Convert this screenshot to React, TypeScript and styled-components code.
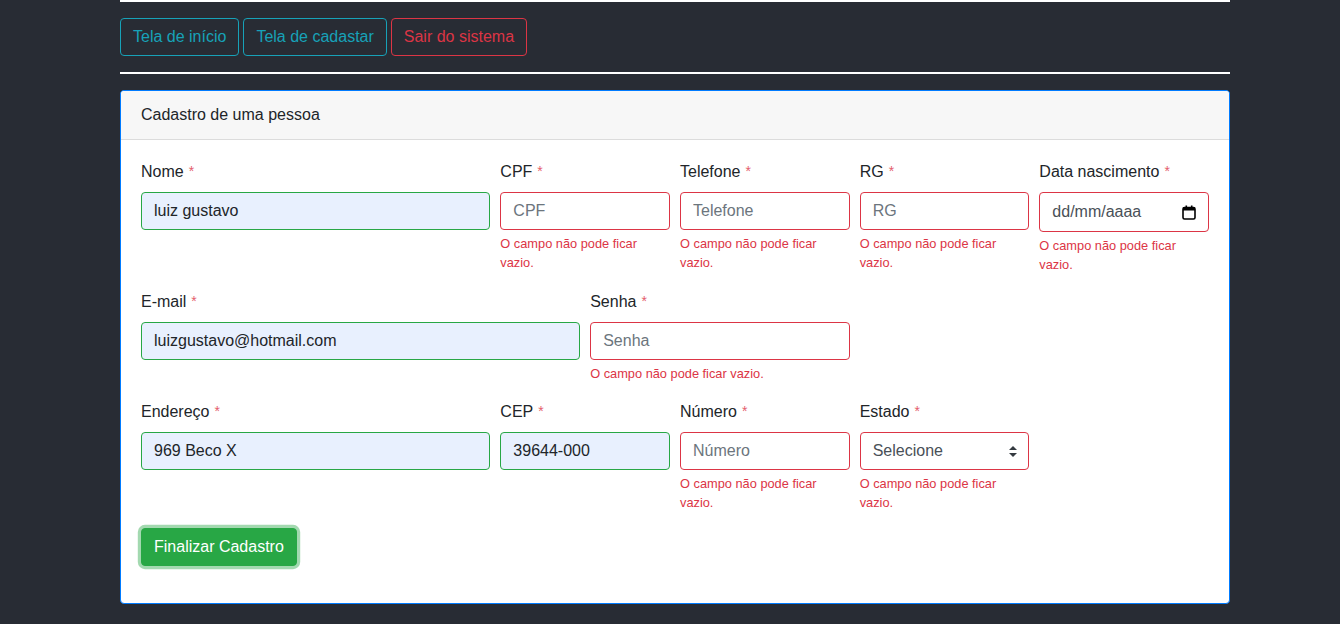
import React from 'react';
import styled, { createGlobalStyle } from 'styled-components';

const GlobalStyle = createGlobalStyle`
  html, body {
    margin: 0;
    background: #282c34;
    font-family: "Liberation Sans", Arial, sans-serif;
    font-size: 16px;
    line-height: 1.5;
    color: #212529;
  }
`;

const Page = styled.div`
  padding: 0 110px 21px 120px;
`;

const Rule = styled.div`
  height: 2px;
  background: #ffffff;
`;

const Nav = styled.nav`
  display: flex;
  gap: 4px;
  padding: 16px 0 16px;
`;

const NavButton = styled.button<{ $tone: 'info' | 'danger' }>`
  height: 38px;
  padding: 0 12px;
  font: inherit;
  font-size: 16px;
  background: transparent;
  border-radius: 4px;
  color: ${p => (p.$tone === 'info' ? '#17a2b8' : '#dc3545')};
  border: 1px solid ${p => (p.$tone === 'info' ? '#17a2b8' : '#dc3545')};
  cursor: pointer;
`;

const Card = styled.section`
  margin-top: 16px;
  background: #ffffff;
  border: 1px solid #007bff;
  border-radius: 4px;
  overflow: hidden;
`;

const CardHeader = styled.header`
  padding: 12px 20px;
  background: #f7f7f7;
  border-bottom: 1px solid #dcdcdc;
`;

const CardBody = styled.form`
  padding: 20px 20px 37px;
`;

const Row = styled.div`
  display: grid;
  grid-template-columns: repeat(12, 1fr);
  column-gap: 10px;
  margin-bottom: 16px;
  align-items: start;
`;

const Group = styled.div<{ $span: number }>`
  grid-column: span ${p => p.$span};
  min-width: 0;
`;

const Label = styled.label`
  display: block;
  margin-bottom: 8px;
`;

const Star = styled.span`
  color: #e4606d;
  font-size: 14px;
  margin-left: 5px;
  vertical-align: 1px;
`;

const fieldBase = `
  box-sizing: border-box;
  width: 100%;
  height: 38px;
  padding: 6px 12px;
  font-family: "Liberation Sans", Arial, sans-serif;
  font-size: 16px;
  border-radius: 4px;
  outline: none;
`;

const Input = styled.input<{ $valid?: boolean }>`
  ${fieldBase}
  color: #212529;
  background: ${p => (p.$valid ? '#e8f0fe' : '#ffffff')};
  border: 1px solid ${p => (p.$valid ? '#28a745' : '#dc3545')};
  &::placeholder {
    color: #6c757d;
  }
`;

const DateBox = styled.div`
  ${fieldBase}
  height: 40px;
  display: flex;
  align-items: center;
  justify-content: space-between;
  color: #495057;
  background: #ffffff;
  border: 1px solid #dc3545;
`;

const SelectWrap = styled.div`
  position: relative;
`;

const Select = styled.select`
  ${fieldBase}
  appearance: none;
  color: #495057;
  background: #ffffff;
  border: 1px solid #dc3545;
`;

const Arrows = styled.svg`
  position: absolute;
  right: 12px;
  top: 14px;
  pointer-events: none;
`;

const Feedback = styled.div`
  margin-top: 4px;
  font-size: 12.8px;
  line-height: 19.2px;
  color: #dc3545;
`;

const Submit = styled.button`
  height: 38px;
  padding: 0 12px;
  font: inherit;
  font-size: 16px;
  color: #ffffff;
  background: #28a745;
  border: 1px solid #28a745;
  border-radius: 4px;
  box-shadow: 0 0 0 3.2px rgba(72, 180, 97, 0.5);
`;

const ERR = 'O campo não pode ficar vazio.';

type FieldProps = {
  span: number;
  label: string;
  value?: string;
  placeholder?: string;
};

const Field = ({ span, label, value, placeholder }: FieldProps) => (
  <Group $span={span}>
    <Label>
      {label}
      <Star>*</Star>
    </Label>
    {value ? (
      <Input $valid defaultValue={value} />
    ) : (
      <>
        <Input placeholder={placeholder} />
        <Feedback>{ERR}</Feedback>
      </>
    )}
  </Group>
);

export default function App() {
  return (
    <Page>
      <GlobalStyle />
      <Rule />
      <Nav>
        <NavButton $tone="info">Tela de início</NavButton>
        <NavButton $tone="info">Tela de cadastar</NavButton>
        <NavButton $tone="danger">Sair do sistema</NavButton>
      </Nav>
      <Rule />
      <Card>
        <CardHeader>Cadastro de uma pessoa</CardHeader>
        <CardBody onSubmit={e => e.preventDefault()}>
          <Row>
            <Field span={4} label="Nome" value="luiz gustavo" />
            <Field span={2} label="CPF" placeholder="CPF" />
            <Field span={2} label="Telefone" placeholder="Telefone" />
            <Field span={2} label="RG" placeholder="RG" />
            <Group $span={2}>
              <Label>
                Data nascimento
                <Star>*</Star>
              </Label>
              <DateBox>
                <span>dd/mm/aaaa</span>
                <svg width="14" height="15" viewBox="0 0 14 15">
                  <rect x="1" y="2.5" width="12" height="11.5" rx="1.5" fill="none" stroke="#000" strokeWidth="1.6" />
                  <rect x="1" y="2.5" width="12" height="3" fill="#000" />
                  <rect x="3.5" y="0.5" width="1.6" height="3" fill="#000" />
                  <rect x="8.9" y="0.5" width="1.6" height="3" fill="#000" />
                </svg>
              </DateBox>
              <Feedback>{ERR}</Feedback>
            </Group>
          </Row>
          <Row>
            <Field span={5} label="E-mail" value="luizgustavo@hotmail.com" />
            <Field span={3} label="Senha" placeholder="Senha" />
          </Row>
          <Row>
            <Field span={4} label="Endereço" value="969 Beco X" />
            <Field span={2} label="CEP" value="39644-000" />
            <Field span={2} label="Número" placeholder="Número" />
            <Group $span={2}>
              <Label>
                Estado
                <Star>*</Star>
              </Label>
              <SelectWrap>
                <Select defaultValue="">
                  <option value="">Selecione</option>
                </Select>
                <Arrows width="8" height="11" viewBox="0 0 8 11">
                  <path d="M4 0 L8 4 H0 Z" fill="#343a40" />
                  <path d="M4 11 L0 7 H8 Z" fill="#343a40" />
                </Arrows>
              </SelectWrap>
              <Feedback>{ERR}</Feedback>
            </Group>
          </Row>
          <Submit type="submit">Finalizar Cadastro</Submit>
        </CardBody>
      </Card>
    </Page>
  );
}
